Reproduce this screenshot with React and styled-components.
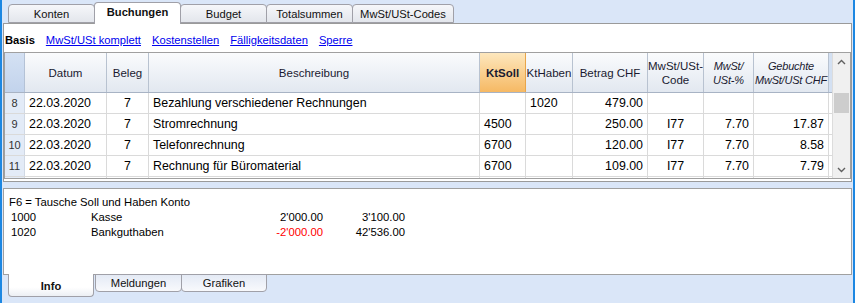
import React from "react";
import styled, { createGlobalStyle } from "styled-components";

const GlobalStyle = createGlobalStyle`
  html, body {
    margin: 0;
    padding: 0;
    background: #dae6f8;
  }
  body {
    font-family: "Liberation Sans", Arial, sans-serif;
  }
`;

const columns = [
  { key: "datum", label: "Datum", width: 82, align: "left" },
  { key: "beleg", label: "Beleg", width: 42, align: "center" },
  { key: "text", label: "Beschreibung", width: 331, align: "left" },
  { key: "soll", label: "KtSoll", width: 46, align: "left", active: true },
  { key: "haben", label: "KtHaben", width: 47, align: "left" },
  { key: "betrag", label: "Betrag CHF", width: 75, align: "right" },
  { key: "code", label: ["MwSt/USt-", "Code"], width: 56, align: "center" },
  { key: "pct", label: ["MwSt/", "USt-%"], width: 50, align: "right", italic: true },
  { key: "vat", label: ["Gebuchte", "MwSt/USt CHF"], width: 75, align: "right", italic: true },
];

const rows = [
  { nr: 8, datum: "22.03.2020", beleg: "7", text: "Bezahlung verschiedener Rechnungen", soll: "", haben: "1020", betrag: "479.00", code: "", pct: "", vat: "" },
  { nr: 9, datum: "22.03.2020", beleg: "7", text: "Stromrechnung", soll: "4500", haben: "", betrag: "250.00", code: "I77", pct: "7.70", vat: "17.87" },
  { nr: 10, datum: "22.03.2020", beleg: "7", text: "Telefonrechnung", soll: "6700", haben: "", betrag: "120.00", code: "I77", pct: "7.70", vat: "8.58" },
  { nr: 11, datum: "22.03.2020", beleg: "7", text: "Rechnung für Büromaterial", soll: "6700", haben: "", betrag: "109.00", code: "I77", pct: "7.70", vat: "7.79" },
  { nr: "", datum: "", beleg: "", text: "", soll: "", haben: "", betrag: "", code: "", pct: "", vat: "" },
];

const template = `20px ${columns.map((c) => c.width + "px").join(" ")} 3px`;

const topTabs = [
  { label: "Konten", width: 87 },
  { label: "Buchungen", width: 87, active: true },
  { label: "Budget", width: 87 },
  { label: "Totalsummen", width: 87 },
  { label: "MwSt/USt-Codes", width: 102 },
];

const bottomTabs = [
  { label: "Info", width: 86, active: true },
  { label: "Meldungen", width: 87 },
  { label: "Grafiken", width: 86 },
];

const App = () => {
  return (
    <Window>
      <GlobalStyle />
      <TopTabBar>
        {topTabs.map((t) => (
          <TopTab key={t.label} $active={t.active} style={{ width: t.width }}>
            {t.label}
          </TopTab>
        ))}
      </TopTabBar>
      <Panel>
        <SubBar>
          <SubCurrent>Basis</SubCurrent>
          <SubLink>MwSt/USt komplett</SubLink>
          <SubLink>Kostenstellen</SubLink>
          <SubLink>Fälligkeitsdaten</SubLink>
          <SubLink>Sperre</SubLink>
        </SubBar>
        <GridFrame>
          <Table>
            <HeaderRow>
              <RowNumHead />
              {columns.map((c) => (
                <HeadCell key={c.key} $active={c.active} $italic={c.italic}>
                  {Array.isArray(c.label) ? (
                    <>
                      <span>{c.label[0]}</span>
                      <span>{c.label[1]}</span>
                    </>
                  ) : (
                    c.label
                  )}
                </HeadCell>
              ))}
              <HeadFiller />
            </HeaderRow>
            {rows.map((r, i) => (
              <DataRow key={i}>
                <RowNum>{r.nr}</RowNum>
                {columns.map((c) => (
                  <Cell key={c.key} $align={c.align}>
                    {r[c.key]}
                  </Cell>
                ))}
                <Filler />
              </DataRow>
            ))}
          </Table>
          <ScrollBar>
            <ScrollArrow>
              <svg width="9" height="6" viewBox="0 0 9 6">
                <path d="M1 5 L4.5 1.5 L8 5" fill="none" stroke="#606060" strokeWidth="1.4" />
              </svg>
            </ScrollArrow>
            <ScrollTrack>
              <Thumb />
            </ScrollTrack>
            <ScrollArrow>
              <svg width="9" height="6" viewBox="0 0 9 6">
                <path d="M1 1 L4.5 4.5 L8 1" fill="none" stroke="#606060" strokeWidth="1.4" />
              </svg>
            </ScrollArrow>
          </ScrollBar>
        </GridFrame>
      </Panel>
      <InfoPanel>
        <InfoTitle>F6 = Tausche Soll und Haben Konto</InfoTitle>
        <InfoLine>
          <span>1000</span>
          <span>Kasse</span>
          <Amount>2'000.00</Amount>
          <Amount>3'100.00</Amount>
        </InfoLine>
        <InfoLine>
          <span>1020</span>
          <span>Bankguthaben</span>
          <Amount $negative>-2'000.00</Amount>
          <Amount>42'536.00</Amount>
        </InfoLine>
      </InfoPanel>
      <BottomTabBar>
        {bottomTabs.map((t) => (
          <BottomTab key={t.label} $active={t.active} style={{ width: t.width }}>
            {t.label}
          </BottomTab>
        ))}
      </BottomTabBar>
    </Window>
  );
};

export default App;

const Window = styled.div`
  width: 855px;
  height: 303px;
  box-sizing: border-box;
  border-left: 2px solid #1c87e2;
  border-right: 2px solid #1c87e2;
  padding: 0 1px;
  background: #dae6f8;
  display: flex;
  flex-direction: column;
  overflow: hidden;
`;

const TopTabBar = styled.div`
  display: flex;
  align-items: flex-end;
  height: 23px;
  padding-left: 5px;
  position: relative;
  z-index: 2;
`;

const TopTab = styled.div`
  box-sizing: border-box;
  height: ${(p) => (p.$active ? "22px" : "19px")};
  margin-bottom: ${(p) => (p.$active ? "-1px" : "0")};
  margin-left: -1px;
  border: 1px solid #a0a0a8;
  border-bottom: ${(p) => (p.$active ? "none" : "1px solid #a0a0a8")};
  border-radius: 4px 4px 0 0;
  background: ${(p) =>
    p.$active ? "#ffffff" : "linear-gradient(#f6f7fa, #e3e6ec)"};
  display: flex;
  align-items: center;
  justify-content: center;
  padding-bottom: ${(p) => (p.$active ? "3px" : "0")};
  font-size: 11.2px;
  font-weight: ${(p) => (p.$active ? 700 : 400)};
  color: #111;
  &:first-child {
    margin-left: 0;
  }
`;

const Panel = styled.div`
  box-sizing: border-box;
  height: 159px;
  border: 1px solid #9a9a9a;
  background: #fff;
  display: flex;
  flex-direction: column;
  padding-bottom: 2px;
`;

const SubBar = styled.div`
  box-sizing: border-box;
  height: 28px;
  padding: 4px 0 0 1px;
  display: flex;
  align-items: center;
  gap: 11px;
  font-size: 11.2px;
`;

const SubCurrent = styled.span`
  font-weight: 700;
  color: #000;
`;

const SubLink = styled.span`
  color: #0000ee;
  text-decoration: underline;
`;

const GridFrame = styled.div`
  box-sizing: border-box;
  height: 127px;
  border: 1px solid #a0a0a0;
  display: flex;
  overflow: hidden;
`;

const Table = styled.div`
  width: 827px;
  display: flex;
  flex-direction: column;
  overflow: hidden;
`;

const HeaderRow = styled.div`
  display: grid;
  grid-template-columns: ${template};
  height: 40px;
  flex: none;
  box-sizing: border-box;
  border-bottom: 1px solid #a8b3c4;
`;

const RowNumHead = styled.div`
  background: linear-gradient(#d4e1f3, #c2d3ec);
  border-right: 1px solid #b4c2d6;
`;

const HeadCell = styled.div`
  box-sizing: border-box;
  border-right: 1px solid ${(p) => (p.$active ? "#e8a54a" : "#b8c2d0")};
  background: ${(p) =>
    p.$active
      ? "linear-gradient(#fde7bd, #f6b964)"
      : "linear-gradient(#fafbfd, #e2e8f0)"};
  display: flex;
  flex-direction: column;
  align-items: center;
  justify-content: center;
  text-align: center;
  font-size: ${(p) => (p.$italic ? "11px" : "11.5px")};
  letter-spacing: ${(p) => (p.$italic ? "-0.2px" : "0")};
  line-height: 14px;
  color: #1a1a30;
  font-weight: ${(p) => (p.$active ? 700 : 400)};
  font-style: ${(p) => (p.$italic ? "italic" : "normal")};
  white-space: nowrap;
  overflow: hidden;
`;

const HeadFiller = styled.div`
  background: #d3e0f2;
`;

const DataRow = styled.div`
  display: grid;
  grid-template-columns: ${template};
  height: 21px;
  flex: none;
  box-sizing: border-box;
  border-bottom: 1px solid #dadada;
`;

const RowNum = styled.div`
  background: #e3ebf7;
  border-right: 1px solid #d0d8e4;
  display: flex;
  align-items: center;
  justify-content: center;
  font-size: 11px;
  color: #333;
`;

const Cell = styled.div`
  box-sizing: border-box;
  border-right: 1px solid #dadada;
  display: flex;
  align-items: center;
  justify-content: ${(p) =>
    p.$align === "right" ? "flex-end" : p.$align === "center" ? "center" : "flex-start"};
  padding: 0 4px;
  font-size: 12.4px;
  color: #000;
  white-space: nowrap;
  overflow: hidden;
`;

const Filler = styled.div`
  background: #fff;
`;

const ScrollBar = styled.div`
  width: 18px;
  box-sizing: border-box;
  border-left: 1px solid #dcdcdc;
  background: #f0f0f0;
  display: flex;
  flex-direction: column;
`;

const ScrollArrow = styled.div`
  height: 17px;
  flex: none;
  display: flex;
  align-items: center;
  justify-content: center;
`;

const ScrollTrack = styled.div`
  flex: 1;
  position: relative;
`;

const Thumb = styled.div`
  position: absolute;
  left: 1px;
  right: 1px;
  top: 23px;
  height: 20px;
  background: #cdcdcd;
`;

const InfoPanel = styled.div`
  box-sizing: border-box;
  margin-top: 6px;
  height: 87px;
  border: 1px solid #a0a0a0;
  background: #fff;
  padding: 6px 0 0 5px;
  font-size: 11.3px;
  line-height: 15px;
  color: #000;
`;

const InfoTitle = styled.div``;

const InfoLine = styled.div`
  display: grid;
  grid-template-columns: 80px 150px 82px 82px;
  padding-left: 2px;
`;

const Amount = styled.span`
  text-align: right;
  color: ${(p) => (p.$negative ? "#ff0000" : "#000")};
`;

const BottomTabBar = styled.div`
  display: flex;
  align-items: flex-start;
  padding-left: 5px;
  margin-top: -1px;
  position: relative;
  z-index: 2;
`;

const BottomTab = styled.div`
  box-sizing: border-box;
  height: ${(p) => (p.$active ? "23px" : "18px")};
  margin-right: ${(p) => (p.$active ? "1px" : "-1px")};
  border: 1px solid #a0a0a8;
  border-top: ${(p) => (p.$active ? "none" : "1px solid #a0a0a8")};
  border-radius: 0 0 4px 4px;
  background: ${(p) =>
    p.$active ? "linear-gradient(#ffffff 60%, #eceff4)" : "linear-gradient(#e4eaf5, #f8f9fc)"};
  display: flex;
  align-items: center;
  justify-content: center;
  padding-top: ${(p) => (p.$active ? "1px" : "0")};
  font-size: 11.2px;
  font-weight: ${(p) => (p.$active ? 700 : 400)};
  color: #111;
`;
